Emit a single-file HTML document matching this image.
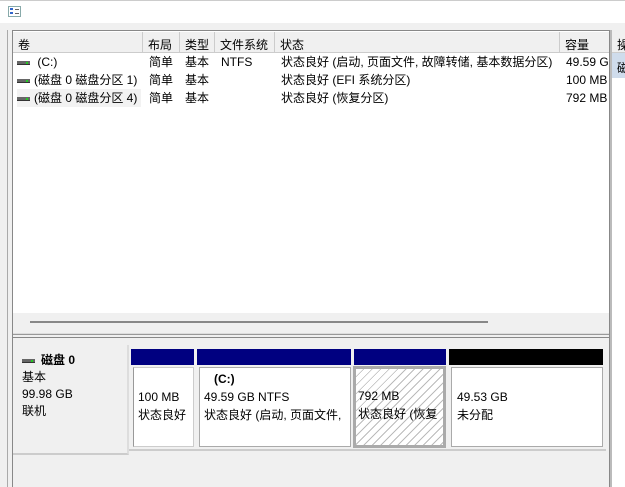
<!DOCTYPE html>
<html><head><meta charset="utf-8"><style>
*{margin:0;padding:0;box-sizing:border-box}
body{width:625px;height:487px;overflow:hidden;background:#f0f0f0;font-family:"Liberation Sans","Noto Sans CJK SC",sans-serif;font-size:12px;color:#000;position:relative}
.a{position:absolute}
.top{left:0;top:0;width:625px;height:23px;background:#fff;border-top:1px solid #ccc}
.hd{top:32px;height:21px;background:#f0f0f0;border-right:1px solid #ccc;border-bottom:1px solid #ccc;padding:4px 0 0 5px;white-space:nowrap;overflow:hidden}
.r{white-space:nowrap;overflow:hidden;height:18px;line-height:18px}
.dk{width:13px;height:4px;background:#666;border-bottom:1px solid #333;display:inline-block;vertical-align:middle;position:relative;margin-right:4px}
.dk:after{content:"";position:absolute;right:2px;top:1px;width:2px;height:2px;background:#2c2}
.bar{top:349px;height:16px;background:#000080}
.box{top:367px;height:80px;background:#fff;border:1px solid #aaa;padding:20px 0 0 6px;line-height:18px;white-space:nowrap;overflow:hidden}
</style></head><body>
<div class="a top"></div>
<div class="a" style="left:8px;top:6px;width:13px;height:11px;border:1px solid #8aa;background:#fff"></div>
<div class="a" style="left:10px;top:8px;width:3px;height:2px;background:#36c"></div>
<div class="a" style="left:10px;top:12px;width:3px;height:2px;background:#36c"></div>
<div class="a" style="left:15px;top:9px;width:4px;height:1px;background:#666"></div>
<div class="a" style="left:15px;top:13px;width:4px;height:1px;background:#666"></div>
<div class="a" style="left:7px;top:30px;width:1px;height:457px;background:#aaa"></div>
<div class="a" style="left:12px;top:30px;width:1px;height:457px;background:#888"></div>
<div class="a" style="left:12px;top:30px;width:598px;height:283px;background:#fff;border-left:1px solid #888;border-top:1px solid #888"></div>
<div class="a hd" style="left:13px;width:130px">卷</div>
<div class="a hd" style="left:143px;width:37px">布局</div>
<div class="a hd" style="left:180px;width:35px">类型</div>
<div class="a hd" style="left:215px;width:60px">文件系统</div>
<div class="a hd" style="left:275px;width:285px">状态</div>
<div class="a hd" style="left:560px;width:50px">容量</div>
<div class="a" style="left:609px;top:30px;width:3px;height:457px;background:#bbb;border-left:1px solid #888"></div>
<div class="a hd" style="left:612px;width:20px;font-size:12px">操</div>
<div class="a" style="left:612px;top:53px;width:13px;height:25px;background:#cfdcec;padding:6px 0 0 5px">磁</div>
<div class="a" style="left:612px;top:78px;width:13px;height:409px;background:#fff"></div>
<div class="a r" style="left:17px;top:53px"><span class="dk"></span> (C:)</div>
<div class="a r" style="left:17px;top:71px"><span class="dk"></span>(磁盘 0 磁盘分区 1)</div>
<div class="a r" style="left:17px;top:89px;background:#f2f2f2;padding-right:4px"><span class="dk"></span>(磁盘 0 磁盘分区 4)</div>
<div class="a r" style="left:149px;top:53px">简单</div><div class="a r" style="left:149px;top:71px">简单</div><div class="a r" style="left:149px;top:89px">简单</div>
<div class="a r" style="left:185px;top:53px">基本</div><div class="a r" style="left:185px;top:71px">基本</div><div class="a r" style="left:185px;top:89px">基本</div>
<div class="a r" style="left:221px;top:53px">NTFS</div>
<div class="a r" style="left:281px;top:53px">状态良好 (启动, 页面文件, 故障转储, 基本数据分区)</div>
<div class="a r" style="left:281px;top:71px">状态良好 (EFI 系统分区)</div>
<div class="a r" style="left:281px;top:89px">状态良好 (恢复分区)</div>
<div class="a r" style="left:566px;top:53px;width:43px">49.59 GB</div>
<div class="a r" style="left:566px;top:71px;width:43px">100 MB</div>
<div class="a r" style="left:566px;top:89px;width:43px">792 MB</div>
<div class="a" style="left:13px;top:313px;width:596px;height:21px;background:#f0f0f0"></div>
<div class="a" style="left:30px;top:321px;width:458px;height:2px;background:#888"></div>
<div class="a" style="left:13px;top:333px;width:596px;height:2px;background:#ddd;border-bottom:1px solid #999"></div>
<div class="a" style="left:13px;top:337px;width:596px;height:150px;background:#f0f0f0;border-top:1px solid #888"></div>
<div class="a" style="left:13px;top:345px;width:116px;height:110px;background:#f0f0f0;border-right:2px solid #ddd;border-bottom:2px solid #ccc;padding:7px 0 0 9px;line-height:17px">
<div><span class="dk" style="margin-right:6px"></span><b>磁盘 0</b></div>基本<br>99.98 GB<br>联机</div>
<div class="a" style="left:129px;top:345px;width:477px;height:106px;border-bottom:2px solid #ccc"></div>
<div class="a bar" style="left:131px;width:63px"></div>
<div class="a bar" style="left:197px;width:154px"></div>
<div class="a bar" style="left:354px;width:92px"></div>
<div class="a bar" style="left:449px;width:154px;background:#000"></div>
<div class="a box" style="left:133px;width:61px;border-color:#ccc #ccc #ccc #999;padding-left:4px">100 MB<br>状态良好</div>
<div class="a box" style="left:199px;width:152px;padding:2px 0 0 4px"><b style="padding-left:10px">(C:)</b><br>49.59 GB NTFS<br>状态良好 (启动, 页面文件,</div>
<div class="a" style="left:353px;top:366px;width:93px;height:82px;background:#aaa"></div>
<div class="a box" style="left:356px;width:87px;top:369px;height:76px;border:none;padding:18px 0 0 2px;background:repeating-linear-gradient(135deg,#fff 0,#fff 5px,#bbb 5px,#bbb 6px)">792 MB<br>状态良好 (恢复</div>
<div class="a box" style="left:451px;width:152px;padding-left:5px">49.53 GB<br>未分配</div>
</body></html>
